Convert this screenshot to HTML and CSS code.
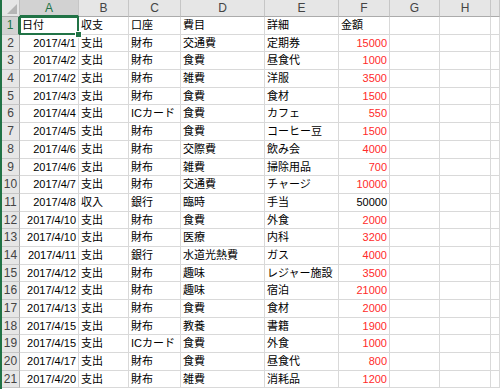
FILE: index.html
```html
<!DOCTYPE html>
<html lang="ja">
<head>
<meta charset="UTF-8">
<title>家計簿</title>
<link rel="stylesheet" href="styles.css">
</head>
<body>
<div id="sheet">
    <div class="row head">
        <div class="corner"></div>
        <div class="col sel">A</div>
        <div class="col">B</div>
        <div class="col">C</div>
        <div class="col">D</div>
        <div class="col">E</div>
        <div class="col">F</div>
        <div class="col">G</div>
        <div class="col">H</div>
        <div class="col"></div>
    </div>
    <div class="row">
        <div class="num sel">1</div>
        <div class="cell active">日付</div><div class="cell">収支</div><div class="cell">口座</div><div class="cell">費目</div><div class="cell">詳細</div><div class="cell">金額</div><div class="cell"></div><div class="cell"></div><div class="cell"></div>
    </div>
    <div class="row">
        <div class="num">2</div>
        <div class="cell r">2017/4/1</div><div class="cell">支出</div><div class="cell">財布</div><div class="cell">交通費</div><div class="cell">定期券</div><div class="cell r red">15000</div><div class="cell"></div><div class="cell"></div><div class="cell"></div>
    </div>
    <div class="row">
        <div class="num">3</div>
        <div class="cell r">2017/4/2</div><div class="cell">支出</div><div class="cell">財布</div><div class="cell">食費</div><div class="cell">昼食代</div><div class="cell r red">1000</div><div class="cell"></div><div class="cell"></div><div class="cell"></div>
    </div>
    <div class="row">
        <div class="num">4</div>
        <div class="cell r">2017/4/2</div><div class="cell">支出</div><div class="cell">財布</div><div class="cell">雑費</div><div class="cell">洋服</div><div class="cell r red">3500</div><div class="cell"></div><div class="cell"></div><div class="cell"></div>
    </div>
    <div class="row">
        <div class="num">5</div>
        <div class="cell r">2017/4/3</div><div class="cell">支出</div><div class="cell">財布</div><div class="cell">食費</div><div class="cell">食材</div><div class="cell r red">1500</div><div class="cell"></div><div class="cell"></div><div class="cell"></div>
    </div>
    <div class="row">
        <div class="num">6</div>
        <div class="cell r">2017/4/4</div><div class="cell">支出</div><div class="cell">ICカード</div><div class="cell">食費</div><div class="cell">カフェ</div><div class="cell r red">550</div><div class="cell"></div><div class="cell"></div><div class="cell"></div>
    </div>
    <div class="row">
        <div class="num">7</div>
        <div class="cell r">2017/4/5</div><div class="cell">支出</div><div class="cell">財布</div><div class="cell">食費</div><div class="cell">コーヒー豆</div><div class="cell r red">1500</div><div class="cell"></div><div class="cell"></div><div class="cell"></div>
    </div>
    <div class="row">
        <div class="num">8</div>
        <div class="cell r">2017/4/6</div><div class="cell">支出</div><div class="cell">財布</div><div class="cell">交際費</div><div class="cell">飲み会</div><div class="cell r red">4000</div><div class="cell"></div><div class="cell"></div><div class="cell"></div>
    </div>
    <div class="row">
        <div class="num">9</div>
        <div class="cell r">2017/4/6</div><div class="cell">支出</div><div class="cell">財布</div><div class="cell">雑費</div><div class="cell">掃除用品</div><div class="cell r red">700</div><div class="cell"></div><div class="cell"></div><div class="cell"></div>
    </div>
    <div class="row">
        <div class="num">10</div>
        <div class="cell r">2017/4/7</div><div class="cell">支出</div><div class="cell">財布</div><div class="cell">交通費</div><div class="cell">チャージ</div><div class="cell r red">10000</div><div class="cell"></div><div class="cell"></div><div class="cell"></div>
    </div>
    <div class="row">
        <div class="num">11</div>
        <div class="cell r">2017/4/8</div><div class="cell">収入</div><div class="cell">銀行</div><div class="cell">臨時</div><div class="cell">手当</div><div class="cell r">50000</div><div class="cell"></div><div class="cell"></div><div class="cell"></div>
    </div>
    <div class="row">
        <div class="num">12</div>
        <div class="cell r">2017/4/10</div><div class="cell">支出</div><div class="cell">財布</div><div class="cell">食費</div><div class="cell">外食</div><div class="cell r red">2000</div><div class="cell"></div><div class="cell"></div><div class="cell"></div>
    </div>
    <div class="row">
        <div class="num">13</div>
        <div class="cell r">2017/4/10</div><div class="cell">支出</div><div class="cell">財布</div><div class="cell">医療</div><div class="cell">内科</div><div class="cell r red">3200</div><div class="cell"></div><div class="cell"></div><div class="cell"></div>
    </div>
    <div class="row">
        <div class="num">14</div>
        <div class="cell r">2017/4/11</div><div class="cell">支出</div><div class="cell">銀行</div><div class="cell">水道光熱費</div><div class="cell">ガス</div><div class="cell r red">4000</div><div class="cell"></div><div class="cell"></div><div class="cell"></div>
    </div>
    <div class="row">
        <div class="num">15</div>
        <div class="cell r">2017/4/12</div><div class="cell">支出</div><div class="cell">財布</div><div class="cell">趣味</div><div class="cell">レジャー施設</div><div class="cell r red">3500</div><div class="cell"></div><div class="cell"></div><div class="cell"></div>
    </div>
    <div class="row">
        <div class="num">16</div>
        <div class="cell r">2017/4/12</div><div class="cell">支出</div><div class="cell">財布</div><div class="cell">趣味</div><div class="cell">宿泊</div><div class="cell r red">21000</div><div class="cell"></div><div class="cell"></div><div class="cell"></div>
    </div>
    <div class="row">
        <div class="num">17</div>
        <div class="cell r">2017/4/13</div><div class="cell">支出</div><div class="cell">財布</div><div class="cell">食費</div><div class="cell">食材</div><div class="cell r red">2000</div><div class="cell"></div><div class="cell"></div><div class="cell"></div>
    </div>
    <div class="row">
        <div class="num">18</div>
        <div class="cell r">2017/4/15</div><div class="cell">支出</div><div class="cell">財布</div><div class="cell">教養</div><div class="cell">書籍</div><div class="cell r red">1900</div><div class="cell"></div><div class="cell"></div><div class="cell"></div>
    </div>
    <div class="row">
        <div class="num">19</div>
        <div class="cell r">2017/4/15</div><div class="cell">支出</div><div class="cell">ICカード</div><div class="cell">食費</div><div class="cell">外食</div><div class="cell r red">1000</div><div class="cell"></div><div class="cell"></div><div class="cell"></div>
    </div>
    <div class="row">
        <div class="num">20</div>
        <div class="cell r">2017/4/17</div><div class="cell">支出</div><div class="cell">財布</div><div class="cell">食費</div><div class="cell">昼食代</div><div class="cell r red">800</div><div class="cell"></div><div class="cell"></div><div class="cell"></div>
    </div>
    <div class="row">
        <div class="num">21</div>
        <div class="cell r">2017/4/20</div><div class="cell">支出</div><div class="cell">財布</div><div class="cell">雑費</div><div class="cell">消耗品</div><div class="cell r red">1200</div><div class="cell"></div><div class="cell"></div><div class="cell"></div>
    </div>
</div>
</body>
</html>
```

FILE: styles.css
```css
html, body {
    margin: 0;
    padding: 0;
    background: #fff;
}
#sheet {
    width: 500px;
    height: 389px;
    overflow: hidden;
    border-left: 2px solid #217346;
    box-sizing: border-box;
    font: 11px "Liberation Sans", "Noto Sans CJK JP", sans-serif;
    color: #000;
}
.row {
    display: grid;
    grid-template-columns: 18px 59px 50px 52px 84px 74px 51px 50px 51px 1fr;
    height: 17.7px;
}
.row.head {
    height: 17px;
    background: #e6e6e6;
}
.row > div {
    box-sizing: border-box;
    border-right: 1px solid #d9d9d9;
    border-bottom: 1px solid #d9d9d9;
    white-space: nowrap;
    overflow: hidden;
    line-height: 17px;
}
.corner {
    position: relative;
    background: #e6e6e6;
    border-right-color: #bfbfbf !important;
    border-bottom-color: #ababab !important;
}
.corner::after {
    content: "";
    position: absolute;
    right: 2px;
    bottom: 2px;
    border-style: solid;
    border-width: 0 0 10px 10px;
    border-color: transparent transparent #b5b5b5 transparent;
}
.col {
    text-align: center;
    font-size: 12px;
    color: #444;
    line-height: 16px !important;
    border-right-color: #c6c6c6 !important;
    border-bottom-color: #ababab !important;
}
.col.sel {
    background: #d2d2d2;
    color: #217346;
    border-bottom: 2px solid #217346 !important;
}
.num {
    background: #e6e6e6;
    text-align: center;
    font-size: 12px;
    color: #444;
    border-right-color: #ababab !important;
    border-bottom-color: #c6c6c6 !important;
}
.num.sel {
    background: #d2d2d2;
    color: #217346;
    border-right: 2px solid #217346 !important;
}
.cell {
    padding: 0 2px;
}
.r {
    text-align: right;
}
.red {
    color: #ff2a2a;
}
.active {
    position: relative;
    overflow: visible !important;
}
.active::before {
    content: "";
    position: absolute;
    left: -1px;
    top: -1px;
    right: -1px;
    bottom: -1px;
    border: 2px solid #217346;
}
.active::after {
    content: "";
    position: absolute;
    right: -4px;
    bottom: -4px;
    width: 5px;
    height: 5px;
    background: #217346;
    border: 1px solid #fff;
}
```
